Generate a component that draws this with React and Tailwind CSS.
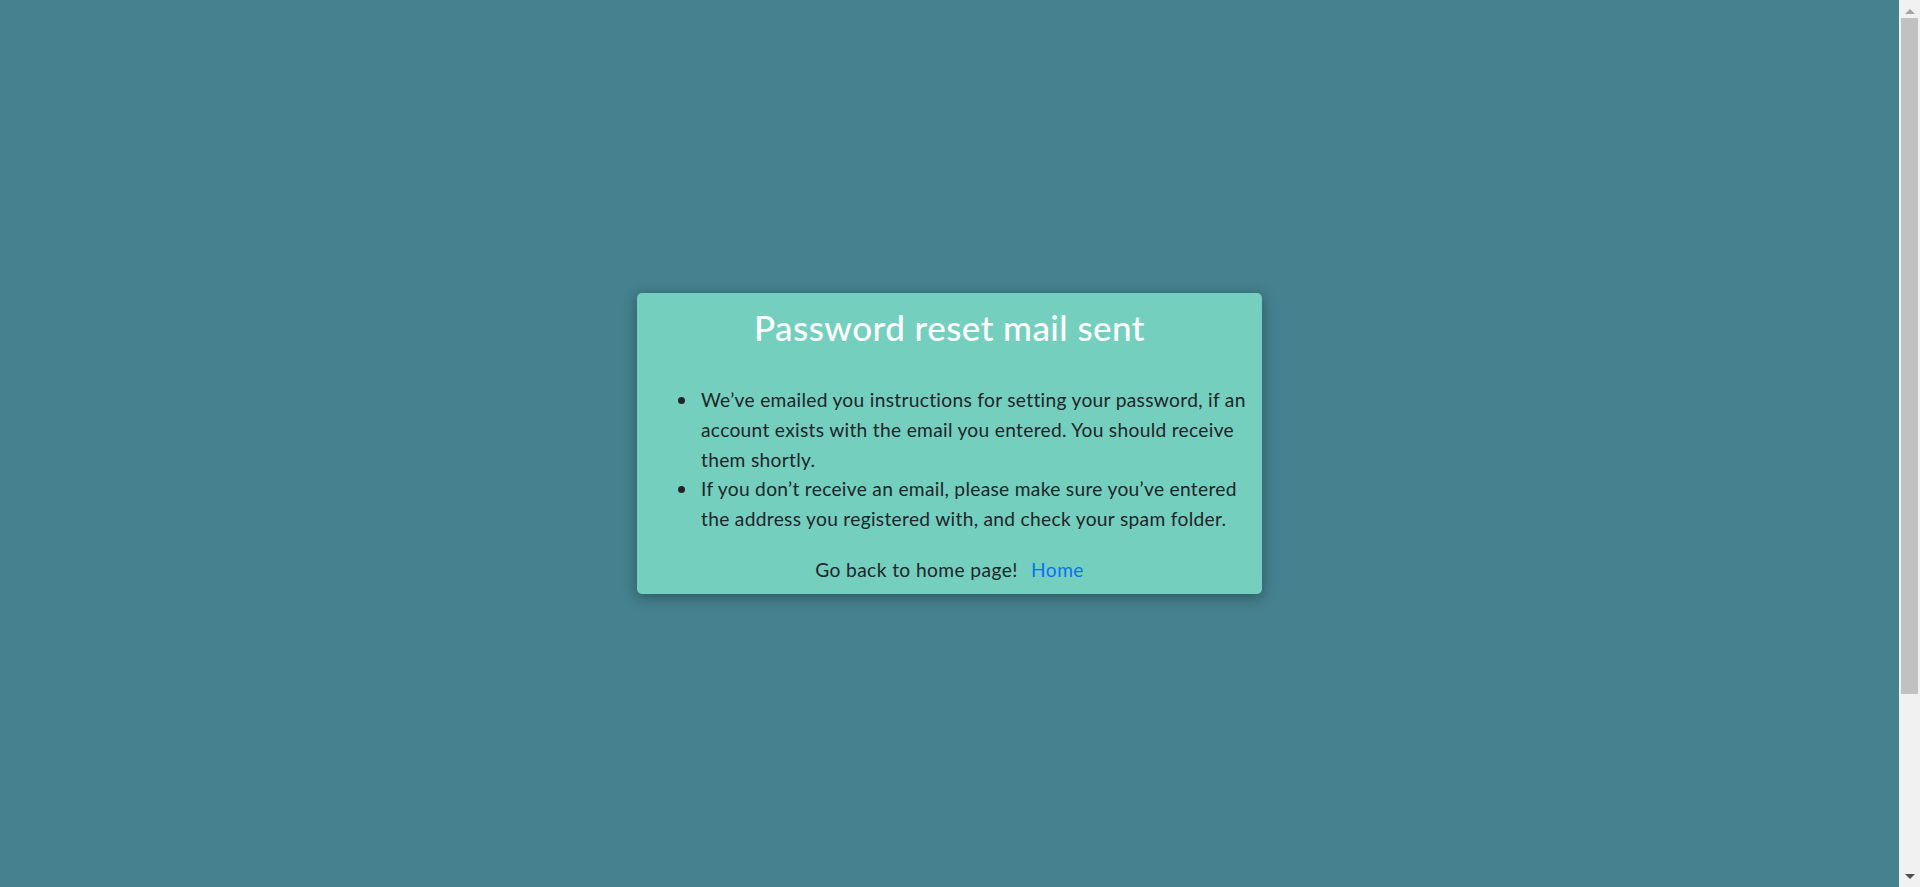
const notes = [
  'We’ve emailed you instructions for setting your password, if an account exists with the email you entered. You should receive them shortly.',
  'If you don’t receive an email, please make sure you’ve entered the address you registered with, and check your spam folder.',
];

export default function App() {
  return (
    <div className="flex h-[887px] w-full overflow-hidden bg-[#45818e] font-['Lato',_'Noto_Sans',_sans-serif]">
      <main className="flex flex-1 items-center justify-center">
        <div className="w-[625px] rounded-[5px] bg-[#74cfbe] px-[13px] pt-[13px] pb-[10px] shadow-[0_3px_14px_rgba(0,0,0,0.35)]">
          <h2 className="text-center text-[35px] leading-[42px] font-medium tracking-[0.45px] text-white">
            Password reset mail sent
          </h2>
          <ul className="mt-[37px] pl-[28px] text-[19.2px] leading-[29.8px] tracking-[0.3px] text-[#212529]">
            {notes.map((note) => (
              <li key={note} className="flex">
                <span className="flex h-[29.8px] w-[23px] shrink-0 items-center pt-[1px]">
                  <span className="h-[7px] w-[7px] rounded-full bg-[#212529]" />
                </span>
                <span>{note}</span>
              </li>
            ))}
          </ul>
          <p className="mt-[21px] text-center text-[19.2px] leading-[29px] tracking-[0.4px] text-[#212529]">
            Go back to home page!{' '}
            <a href="#" className="ml-[8px] text-[#0d6efd]">
              Home
            </a>
          </p>
        </div>
      </main>
      <aside className="flex w-[21px] flex-col bg-[#f1f1f1]">
        <div className="flex h-[17px] items-end justify-center pb-[3px]">
          <div className="h-0 w-0 border-x-[5px] border-b-[5px] border-x-transparent border-b-[#a3a3a3]" />
        </div>
        <div className="mx-[2px] mt-[1px] h-[676px] bg-[#c1c1c1]" />
        <div className="flex-1" />
        <div className="flex h-[17px] items-start justify-center pt-[4px]">
          <div className="h-0 w-0 border-x-[5px] border-t-[5px] border-x-transparent border-t-[#505050]" />
        </div>
      </aside>
    </div>
  );
}
